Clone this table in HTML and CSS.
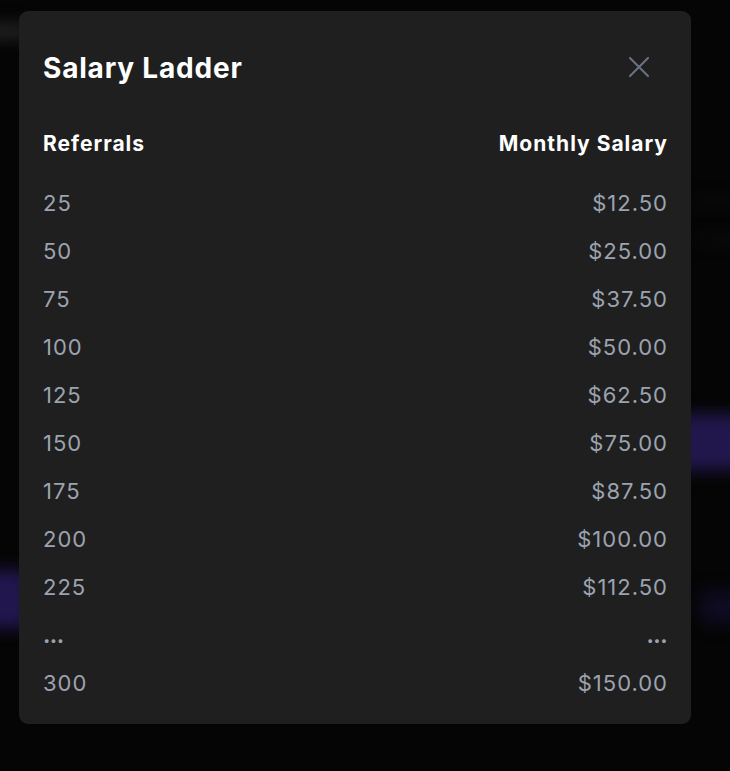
FILE: index.html
```html
<!DOCTYPE html>
<html lang="en">
<head>
<meta charset="utf-8">
<title>Salary Ladder</title>
<link rel="stylesheet" href="styles.css">
</head>
<body>
<div class="backdrop" aria-hidden="true">
  <div class="blob blob-gray"></div>
  <div class="blob blob-line1"></div>
  <div class="blob blob-line2"></div>
  <div class="blob blob-purple-right"></div>
  <div class="blob blob-purple-left"></div>
  <div class="blob blob-purple-right2"></div>
</div>
<div class="modal" role="dialog" aria-labelledby="title">
  <div class="modal-head">
    <h2 id="title" class="modal-title">Salary Ladder</h2>
    <button class="close" aria-label="Close">
      <svg width="20" height="20" viewBox="0 0 20 20" fill="none" stroke="currentColor" stroke-width="2" stroke-linecap="round"><path d="M1 1 19 19M19 1 1 19"/></svg>
    </button>
  </div>
  <div class="table">
    <div class="row head"><span>Referrals</span><span>Monthly Salary</span></div>
    <div class="row"><span>25</span><span>$12.50</span></div>
    <div class="row"><span>50</span><span>$25.00</span></div>
    <div class="row"><span>75</span><span>$37.50</span></div>
    <div class="row"><span>100</span><span>$50.00</span></div>
    <div class="row"><span>125</span><span>$62.50</span></div>
    <div class="row"><span>150</span><span>$75.00</span></div>
    <div class="row"><span>175</span><span>$87.50</span></div>
    <div class="row"><span>200</span><span>$100.00</span></div>
    <div class="row"><span>225</span><span>$112.50</span></div>
    <div class="row gap"><span>...</span><span>...</span></div>
    <div class="row"><span>300</span><span>$150.00</span></div>
  </div>
</div>
</body>
</html>
```
FILE: styles.css
```css
* { box-sizing: border-box; }
html, body { margin: 0; padding: 0; }
body {
  background: #050505;
  width: 730px;
  height: 771px;
  overflow: hidden;
  position: relative;
  font-family: Inter, "Noto Sans", sans-serif;
  padding: 11px 0 0 19px;
}
.backdrop { position: absolute; inset: 0; overflow: hidden; }
.blob { position: absolute; filter: blur(8px); }
.blob-gray { left: -30px; top: 24px; width: 60px; height: 14px; background: #262626; border-radius: 10px; }
.blob-line1 { left: 690px; top: 200px; width: 60px; height: 4px; background: #0e0e0e; }
.blob-line2 { left: 700px; top: 236px; width: 60px; height: 6px; background: #101010; }
.blob-purple-right { left: 676px; top: 414px; width: 80px; height: 56px; background: #22174d; border-radius: 6px; }
.blob-purple-left { left: -40px; top: 570px; width: 70px; height: 58px; background: #22164f; border-radius: 6px; }
.blob-purple-right2 { left: 700px; top: 590px; width: 50px; height: 34px; background: #0f0b22; border-radius: 8px; }

.modal {
  position: relative;
  width: 672px;
  height: 713px;
  background: #1f1f1f;
  border-radius: 9px;
  padding: 39px 23px 17px 24px;
  display: flex;
  flex-direction: column;
}
.modal-head {
  display: flex;
  justify-content: space-between;
  align-items: center;
  height: 36px;
}
.modal-title {
  margin: 0;
  font-size: 28px;
  line-height: 36px;
  font-weight: 700;
  color: #ffffff;
  letter-spacing: 0.8px;
}
.close {
  background: none;
  border: 0;
  padding: 0;
  color: #6b7280;
  width: 20px;
  height: 20px;
  margin-right: 19px;
  margin-top: -2px;
  display: flex;
}
.table { margin-top: 44px; display: flex; flex-direction: column; }
.row {
  display: flex;
  justify-content: space-between;
  height: 48px;
  line-height: 48px;
  font-size: 22px;
  color: #9ca3af;
  letter-spacing: 1px;
}
.row.head {
  height: 28px;
  line-height: 28px;
  font-size: 21px;
  font-weight: 700;
  color: #ffffff;
  margin-bottom: 21px;
}
.row.gap { font-weight: 700; letter-spacing: -0.5px; padding-right: 1px; }
```
